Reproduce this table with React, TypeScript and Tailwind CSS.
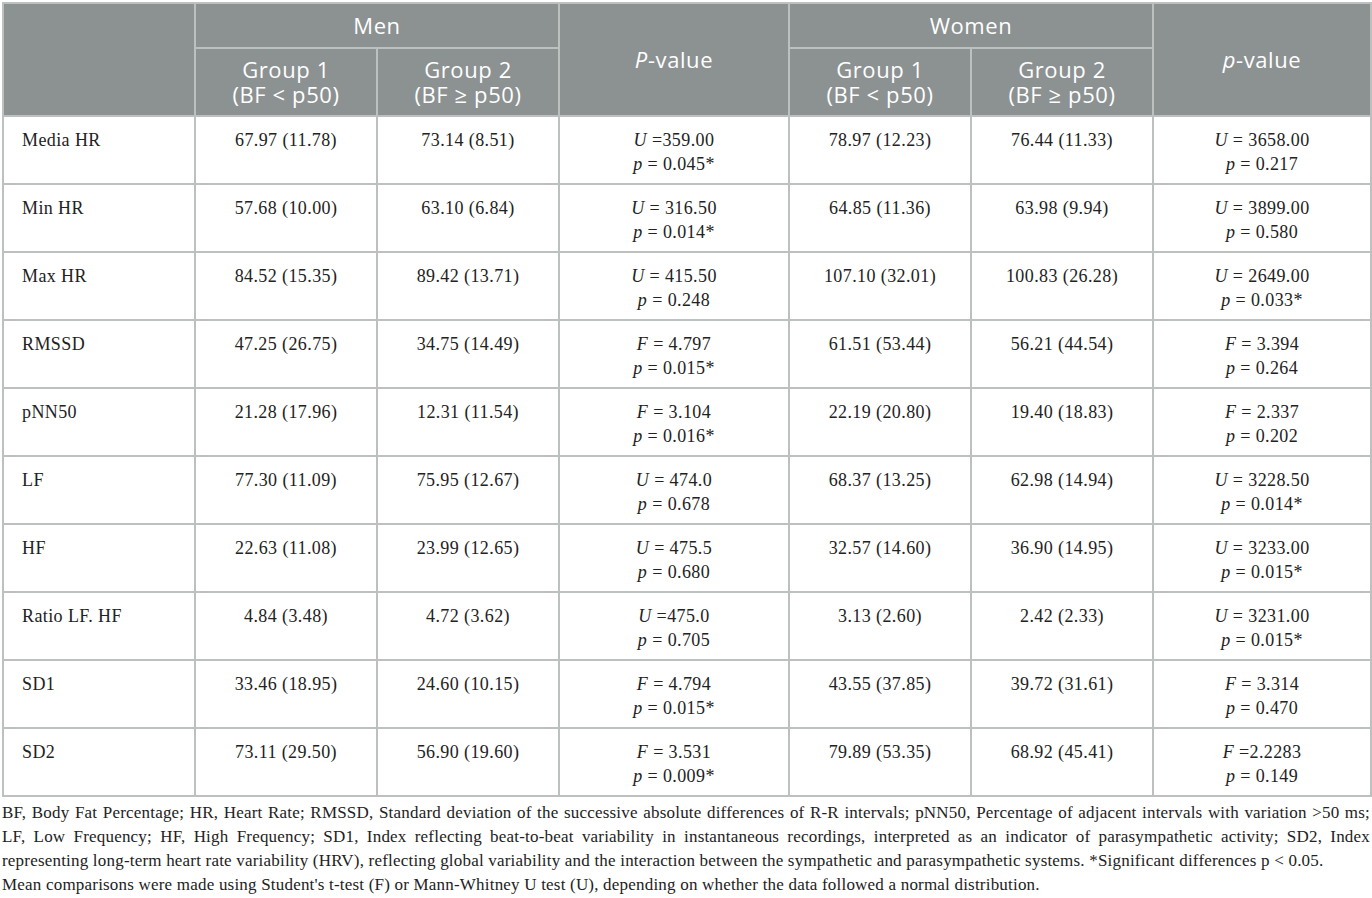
import React from "react";

type Stat = [string, string, string];
type Row = { label: string; m1: string; m2: string; mp: Stat; w1: string; w2: string; wp: Stat };

// [letter, " = value" part, p-value part]
const rows: Row[] = [
  { label: "Media HR", m1: "67.97 (11.78)", m2: "73.14 (8.51)", mp: ["U", " =359.00", "0.045*"], w1: "78.97 (12.23)", w2: "76.44 (11.33)", wp: ["U", " = 3658.00", "0.217"] },
  { label: "Min HR", m1: "57.68 (10.00)", m2: "63.10 (6.84)", mp: ["U", " = 316.50", "0.014*"], w1: "64.85 (11.36)", w2: "63.98 (9.94)", wp: ["U", " = 3899.00", "0.580"] },
  { label: "Max HR", m1: "84.52 (15.35)", m2: "89.42 (13.71)", mp: ["U", " = 415.50", "0.248"], w1: "107.10 (32.01)", w2: "100.83 (26.28)", wp: ["U", " = 2649.00", "0.033*"] },
  { label: "RMSSD", m1: "47.25 (26.75)", m2: "34.75 (14.49)", mp: ["F", " = 4.797", "0.015*"], w1: "61.51 (53.44)", w2: "56.21 (44.54)", wp: ["F", " = 3.394", "0.264"] },
  { label: "pNN50", m1: "21.28 (17.96)", m2: "12.31 (11.54)", mp: ["F", " = 3.104", "0.016*"], w1: "22.19 (20.80)", w2: "19.40 (18.83)", wp: ["F", " = 2.337", "0.202"] },
  { label: "LF", m1: "77.30 (11.09)", m2: "75.95 (12.67)", mp: ["U", " = 474.0", "0.678"], w1: "68.37 (13.25)", w2: "62.98 (14.94)", wp: ["U", " = 3228.50", "0.014*"] },
  { label: "HF", m1: "22.63 (11.08)", m2: "23.99 (12.65)", mp: ["U", " = 475.5", "0.680"], w1: "32.57 (14.60)", w2: "36.90 (14.95)", wp: ["U", " = 3233.00", "0.015*"] },
  { label: "Ratio LF. HF", m1: "4.84 (3.48)", m2: "4.72 (3.62)", mp: ["U", " =475.0", "0.705"], w1: "3.13 (2.60)", w2: "2.42 (2.33)", wp: ["U", " = 3231.00", "0.015*"] },
  { label: "SD1", m1: "33.46 (18.95)", m2: "24.60 (10.15)", mp: ["F", " = 4.794", "0.015*"], w1: "43.55 (37.85)", w2: "39.72 (31.61)", wp: ["F", " = 3.314", "0.470"] },
  { label: "SD2", m1: "73.11 (29.50)", m2: "56.90 (19.60)", mp: ["F", " = 3.531", "0.009*"], w1: "79.89 (53.35)", w2: "68.92 (45.41)", wp: ["F", " =2.2283", "0.149"] },
];

const sans = "font-['Open_Sans',sans-serif]";
const serif = "font-['Liberation_Serif',serif]";
const bd = "border-2 border-[#bcc1c0]";

function StatCell({ s }: { s: Stat }) {
  return (
    <td className={`${bd} h-[68px] pt-[11px] align-top text-center`}>
      <div>
        <i>{s[0]}</i>
        {s[1]}
      </div>
      <div>
        <i>p</i> = {s[2]}
      </div>
    </td>
  );
}

export default function App() {
  const th = `${bd} font-normal text-white text-[22px] leading-[25px] tracking-[0.6px]`;
  const td = `${bd} h-[68px] pt-[11px] align-top text-center`;

  return (
    <div className="w-[1372px] h-[898px] bg-white pt-[2px] px-[2px] overflow-hidden">
      <table className={`w-[1368px] table-fixed border-collapse ${bd} ${serif} text-[18px] leading-[24px] tracking-[0.4px] text-[#222]`}>
        <colgroup>
          <col className="w-[192px]" />
          <col className="w-[182px]" />
          <col className="w-[182px]" />
          <col className="w-[230px]" />
          <col className="w-[182px]" />
          <col className="w-[182px]" />
          <col className="w-[218px]" />
        </colgroup>
        <thead className={`bg-[#8c9192] ${sans}`}>
          <tr>
            <th rowSpan={2} className={th}></th>
            <th colSpan={2} className={`${th} h-[45px]`}>Men</th>
            <th rowSpan={2} className={th}><i>P</i>-value</th>
            <th colSpan={2} className={th}>Women</th>
            <th rowSpan={2} className={th}><i>p</i>-value</th>
          </tr>
          <tr>
            <th className={`${th} h-[68px]`}>Group 1<br />(BF &lt; p50)</th>
            <th className={th}>Group 2<br />(BF ≥ p50)</th>
            <th className={th}>Group 1<br />(BF &lt; p50)</th>
            <th className={th}>Group 2<br />(BF ≥ p50)</th>
          </tr>
        </thead>
        <tbody>
          {rows.map((r) => (
            <tr key={r.label}>
              <td className={`${td} text-left pl-[18px]`}>{r.label}</td>
              <td className={td}>{r.m1}</td>
              <td className={td}>{r.m2}</td>
              <StatCell s={r.mp} />
              <td className={td}>{r.w1}</td>
              <td className={td}>{r.w2}</td>
              <StatCell s={r.wp} />
            </tr>
          ))}
        </tbody>
      </table>
      <p className={`${serif} text-[17px] leading-[24px] tracking-[0.2px] text-[#222] text-justify mt-[4px]`}>
        BF, Body Fat Percentage; HR, Heart Rate; RMSSD, Standard deviation of the successive absolute differences of R-R intervals; pNN50, Percentage of adjacent intervals with variation &gt;50 ms; LF, Low Frequency; HF, High Frequency; SD1, Index reflecting beat-to-beat variability in instantaneous recordings, interpreted as an indicator of parasympathetic activity; SD2, Index representing long-term heart rate variability (HRV), reflecting global variability and the interaction between the sympathetic and parasympathetic systems. *Significant differences p &lt; 0.05.
        <br />
        Mean comparisons were made using Student's t-test (F) or Mann-Whitney U test (U), depending on whether the data followed a normal distribution.
      </p>
    </div>
  );
}
